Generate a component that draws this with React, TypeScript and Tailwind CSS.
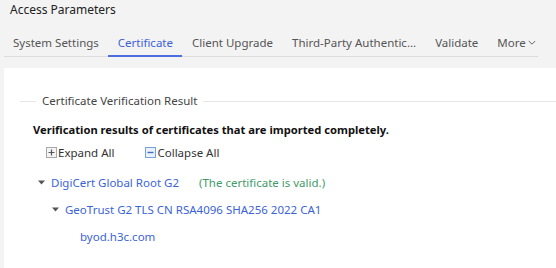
import React from 'react';

const tabs = ['System Settings', 'Certificate', 'Client Upgrade', 'Third-Party Authentic...', 'Validate'];

const Caret = () => (
  <svg width="7" height="5" viewBox="0 0 7 5" className="shrink-0">
    <path d="M0 0.5 L7 0.5 L3.5 4.5 Z" fill="#555" />
  </svg>
);

const BoxIcon = ({ plus }: { plus?: boolean }) =>
  plus ? (
    <svg width="11" height="11" viewBox="0 0 11 11" className="shrink-0">
      <rect x="0.5" y="0.5" width="10" height="10" fill="#f4f4f4" stroke="#a8a8a8" />
      <path d="M2.5 5.5 H8.5 M5.5 2.5 V8.5" stroke="#555" strokeWidth="1.2" />
    </svg>
  ) : (
    <svg width="11" height="11" viewBox="0 0 11 11" className="shrink-0">
      <rect x="0.5" y="0.5" width="10" height="10" fill="#eaf1fb" stroke="#7aa0d8" />
      <path d="M2.5 5.5 H8.5" stroke="#3d6fc4" strokeWidth="1.4" />
    </svg>
  );

export default function App() {
  return (
    <div
      className="w-[556px] h-[268px] overflow-hidden bg-[#f3f3f3] text-[#333] flex flex-col whitespace-nowrap"
      style={{ fontFamily: '"Noto Sans", "Open Sans", sans-serif' }}
    >
      {/* Title */}
      <div className="h-[20px] pl-[10px] text-[12px] flex items-center text-[#222]">Access Parameters</div>

      {/* Tabs */}
      <div className="ml-[4px] w-[534px] h-[37px] pt-[14px] flex items-stretch border-b border-[#dcdcdc] text-[11.5px] text-[#555]">
        {tabs.map((t, i) => (
          <div
            key={t}
            className={`flex items-start ${i === 0 ? 'pl-[9px] pr-[9.5px]' : 'px-[9.5px]'} ${
              i === 1 ? 'text-[#3b63d9] border-b-2 border-[#4a6fe3] -mb-px' : ''
            }`}
          >
            {t}
          </div>
        ))}
        <div className="flex items-start px-[9.5px] gap-[2px]">
          More
          <svg width="8" height="6" viewBox="0 0 8 6" className="mt-[6px]">
            <path d="M0.8 1 L4 4.2 L7.2 1" stroke="#666" fill="none" strokeWidth="1" />
          </svg>
        </div>
      </div>

      {/* Panel */}
      <div className="flex-1 mt-[11px] ml-[4px] bg-white pt-[26px]">
        <div className="flex items-center h-[14px]">
          <div className="w-[16px] ml-[16px] border-t border-[#e6e6e6]" />
          <div className="px-[6px] text-[11.5px] text-[#444]">Certificate Verification Result</div>
          <div className="flex-1 border-t border-[#e6e6e6]" />
        </div>

        <div className="mt-[14px] ml-[29px] text-[11.2px] font-bold text-[#111]">
          Verification results of certificates that are imported completely.
        </div>

        <div className="mt-[5px] ml-[42px] flex items-center text-[11.5px] text-[#333] h-[18px]">
          <BoxIcon plus />
          <span className="ml-[1px]">Expand All</span>
          <span className="ml-[31px] flex items-center">
            <BoxIcon />
            <span className="ml-[1px]">Collapse All</span>
          </span>
        </div>

        <div className="mt-[7px] flex flex-col text-[11.5px] text-[#3b63d9]">
          <div className="h-[27px] flex items-center pl-[34px]">
            <Caret />
            <span className="ml-[6px]">DigiCert Global Root G2</span>
            <span className="ml-[20px] text-[#3f9b6b]">(The certificate is valid.)</span>
          </div>
          <div className="h-[27px] flex items-center pl-[48px]">
            <Caret />
            <span className="ml-[6px]">GeoTrust G2 TLS CN RSA4096 SHA256 2022 CA1</span>
          </div>
          <div className="h-[27px] flex items-center pl-[76px]">byod.h3c.com</div>
        </div>
      </div>
    </div>
  );
}
